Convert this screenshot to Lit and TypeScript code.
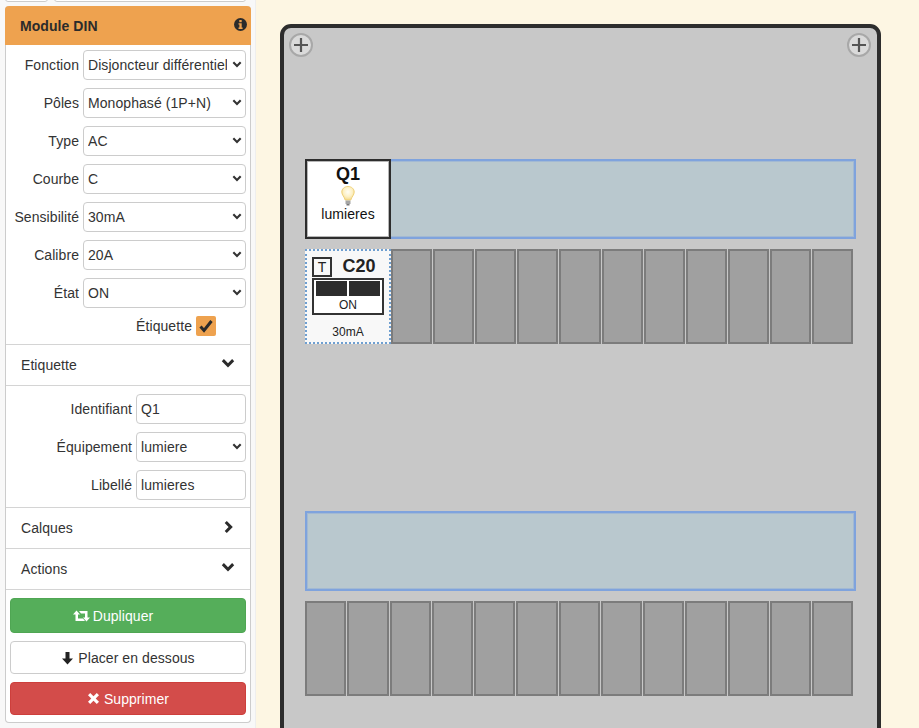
import { LitElement, html, css, svg } from 'lit';
import { customElement } from 'lit/decorators.js';

const chevronDown = svg`<path d="M.8 4.200 2.900 2.100 7 6.200l4.100-4.100 2.100 2.100L7 10.400z" fill="currentColor"/>`;
const chevronRight = svg`<path d="M3.800 1 1.700 3.100 5.600 7l-3.900 3.900L3.800 13l6-6z" fill="currentColor"/>`;

/** One rail position: the label strip and the row of empty module slots under it. */
@customElement('din-rail')
export class DinRail extends LitElement {
  static properties = { filled: { type: Boolean } };
  filled = false;

  static styles = css`
    :host { display: block; width: 551px; }
    .strip {
      height: 80px;
      box-sizing: border-box;
      background: #b9c8ce;
      border: 2px solid #7fa3dd;
      box-shadow: inset 0 0 0 1px rgba(127, 163, 221, 0.4);
      position: relative;
    }
    .tag {
      position: absolute;
      left: -2px;
      top: -2px;
      width: 86px;
      height: 80px;
      box-sizing: border-box;
      background: #fff;
      border: 2px solid #2d2d2d;
      box-shadow: inset 0 0 0 1px rgba(45, 45, 45, 0.35);
      display: flex;
      flex-direction: column;
      align-items: center;
      color: #111;
    }
    .tag b { font-size: 18px; line-height: 20px; margin-top: 3px; }
    .tag svg { display: block; margin-top: 2px; }
    .tag span { font-size: 14px; line-height: 16px; }
    .slots { display: flex; margin-top: 10px; height: 95px; width: 549.25px; }
    .slot {
      flex: 1 1 0;
      box-sizing: border-box;
      background: #a0a0a0;
      border: 2px solid #7c7c7c;
      margin-right: 1px;
    }
    .module {
      flex: 0 0 86px;
      box-sizing: border-box;
      background: #f8f8f8;
      border: 2px dotted #6f9fd0;
      padding: 5px 5px 0;
      color: #222;
    }
    .top { display: flex; align-items: center; }
    .t {
      width: 20px;
      height: 20px;
      box-sizing: border-box;
      border: 2px solid #333;
      font-size: 14px;
      line-height: 16px;
      text-align: center;
    }
    .rating { flex: 1; text-align: center; font-weight: bold; font-size: 18px; padding-left: 2px; }
    .switch { border: 2px solid #333; height: 37px; box-sizing: border-box; margin-top: 1px; background: #fff; }
    .levers { display: flex; gap: 2px; padding: 1px 2px 0; }
    .levers i { flex: 1; height: 15px; background: #2d2d2d; }
    .on { text-align: center; font-size: 12px; line-height: 14px; margin-top: 2px; }
    .sens { text-align: center; font-size: 12px; margin-top: 10px; line-height: 14px; }
  `;

  render() {
    const count = this.filled ? 11 : 13;
    return html`
      <div class="strip">
        ${this.filled
          ? html`<div class="tag">
              <b>Q1</b>
              <svg width="18" height="20" viewBox="0 1 18 20">
                <defs>
                  <radialGradient id="glow" cx="0.5" cy="0.4" r="0.6">
                    <stop offset="0" stop-color="#fffef5" />
                    <stop offset="0.6" stop-color="#fdf0c4" />
                    <stop offset="1" stop-color="#f3d98a" />
                  </radialGradient>
                </defs>
                <path d="M9 1.500C5.300 1.500 2.800 4 2.800 7c0 3 2.400 4.500 3.400 8h5.600c1-3.500 3.400-5 3.400-8 0-3-2.500-5.500-6.200-5.500z" fill="url(#glow)" stroke="#f0d27a" />
                <rect x="6.500" y="15.500" width="5" height="3.500" fill="#a5a5a5" />
                <rect x="7.500" y="19" width="3" height="1.500" fill="#777" />
              </svg>
              <span>lumieres</span>
            </div>`
          : ''}
      </div>
      <div class="slots">
        ${this.filled
          ? html`<div class="module">
              <div class="top"><div class="t">T</div><div class="rating">C20</div></div>
              <div class="switch">
                <div class="levers"><i></i><i></i></div>
                <div class="on">ON</div>
              </div>
              <div class="sens">30mA</div>
            </div>`
          : ''}
        ${Array.from({ length: count }, () => html`<div class="slot"></div>`)}
      </div>
    `;
  }
}

@customElement('app-root')
export class AppRoot extends LitElement {
  static styles = css`
    :host {
      display: flex;
      height: 728px;
      overflow: hidden;
      background: #fdf6e3;
      font-family: "Liberation Sans", Arial, sans-serif;
      font-size: 14px;
      letter-spacing: 0.07px;
      color: #333;
    }
    .side {
      flex: 0 0 256px;
      box-sizing: border-box;
      height: 728px;
      background: #f8f8f8;
      border-right: 1px solid #eee;
      padding-left: 5px;
    }
    .tabs { display: flex; gap: 6px; height: 6px; margin-top: -4px; width: 241px; }
    .tabs div { height: 6px; box-sizing: border-box; background: #fff; border: 1px solid #ccc; border-radius: 4px; }
    .tabs div:first-child { width: 43px; }
    .tabs div:last-child { flex: 1; }
    .panel {
      width: 246px;
      height: 717px;
      margin-top: 4px;
      box-sizing: border-box;
      background: #fff;
      border: 1px solid #ccc;
      border-top: none;
      border-radius: 4px;
    }
    .head {
      height: 39px;
      margin: 0 -1px;
      background: #eea24f;
      border-radius: 4px 4px 0 0;
      display: flex;
      align-items: center;
      justify-content: space-between;
      padding: 0 4px 0 15px;
      font-weight: bold;
      color: #2b2b2b;
    }
    .head svg { margin-top: -3px; }
    .fields { padding: 5px 4px 0 0; }
    .row { display: flex; align-items: center; justify-content: flex-end; height: 30px; margin-bottom: 8px; }
    .row label { margin-right: 4px; white-space: nowrap; }
    .control { position: relative; width: 163px; height: 30px; box-sizing: border-box; }
    .fields.wide .control { width: 110px; }
    select, input {
      appearance: none;
      display: block;
      width: 100%;
      height: 30px;
      box-sizing: border-box;
      border: 1px solid #ccc;
      border-radius: 4px;
      background: #fff;
      padding: 0 4px;
      font: 14px "Liberation Sans", Arial, sans-serif;
      letter-spacing: 0.07px;
      color: #333;
      outline: none;
    }
    select { padding-right: 18px; }
    .caret { position: absolute; right: 4px; top: 10px; pointer-events: none; color: #333; }
    .check-row { display: flex; justify-content: flex-end; align-items: center; height: 20px; margin: 0 34px 8px 0; }
    .check-row span { margin-right: 4px; }
    .box {
      width: 20px;
      height: 20px;
      border-radius: 2px;
      background: #eea24f;
      display: flex;
      align-items: center;
      justify-content: center;
    }
    .sec {
      height: 40px;
      display: flex;
      align-items: center;
      justify-content: space-between;
      padding: 0 15px;
      border-top: 1px solid #d4d4d4;
    }
    .sec svg { color: #2b2b2b; margin-top: -3px; }
    .fields.wide { border-top: 1px solid #d4d4d4; padding-top: 8px; height: 122px; box-sizing: border-box; }
    .actions { border-top: 1px solid #d4d4d4; padding: 8px 4px 0; display: flex; flex-direction: column; gap: 8px; }
    .btn {
      height: 33px;
      box-sizing: border-box;
      border-radius: 4px;
      border: 1px solid #ccc;
      background: #fff;
      display: flex;
      align-items: center;
      justify-content: center;
      gap: 4px;
      color: #333;
    }
    .btn.ok { height: 35px; background: #55ae5a; border-color: #4fa653; color: #fff; gap: 3px; padding-right: 30px; }
    .btn.bad { background: #d34c4a; border-color: #cd3f3c; color: #fff; }
    .main { flex: 1; padding: 24px 0 0 24px; min-width: 0; }
    .board {
      position: relative;
      width: 601px;
      height: 760px;
      box-sizing: border-box;
      background: #c8c8c8;
      border: 4px solid #2d2d2d;
      border-radius: 11px;
      padding: 131px 0 0 21px;
    }
    din-rail + din-rail { margin-top: 167px; }
    .add {
      position: absolute;
      top: 5px;
      width: 24px;
      height: 24px;
      box-sizing: border-box;
      border-radius: 50%;
      border: 2px solid #a8a8a8;
      background: #dadada;
      display: flex;
      align-items: center;
      justify-content: center;
    }
    .add.l { left: 5px; }
    .add.r { right: 6px; }
  `;

  private field(label: string, value: string, options: string[] = [value]) {
    return html`<div class="row">
      <label>${label}</label>
      <div class="control">
        <select>${options.map((o) => html`<option>${o}</option>`)}</select>
        <svg class="caret" width="10" height="10" viewBox="0 0 14 14">${chevronDown}</svg>
      </div>
    </div>`;
  }

  private text(label: string, value: string) {
    return html`<div class="row">
      <label>${label}</label>
      <div class="control"><input .value=${value} /></div>
    </div>`;
  }

  private section(label: string, open: boolean) {
    return html`<div class="sec">
      <span>${label}</span>
      ${open
        ? html`<svg width="14" height="14" viewBox="0 0 14 14">${chevronDown}</svg>`
        : html`<svg width="14" height="14" viewBox="-2 0 14 14">${chevronRight}</svg>`}
    </div>`;
  }

  private plus() {
    return html`<svg width="16" height="16" viewBox="0 0 16 16">
      <path d="M8 1v14M1 8h14" stroke="#555" stroke-width="2.200" fill="none" />
    </svg>`;
  }

  render() {
    return html`
      <aside class="side">
        <div class="tabs"><div></div><div></div></div>
        <div class="panel">
          <div class="head">
            <span>Module DIN</span>
            <svg width="13" height="13" viewBox="0 0 13 13">
              <circle cx="6.500" cy="6.500" r="6.500" fill="#2b2b2b" />
              <rect x="5.300" y="2" width="2.400" height="2.200" fill="#eea24f" />
              <path d="M4.500 5.200h3.200v4.300h.9v1.400H4.500V9.500h.9V6.600h-.9z" fill="#eea24f" />
            </svg>
          </div>
          <div class="fields">
            ${this.field('Fonction', 'Disjoncteur différentiel')}
            ${this.field('Pôles', 'Monophasé (1P+N)')}
            ${this.field('Type', 'AC')}
            ${this.field('Courbe', 'C')}
            ${this.field('Sensibilité', '30mA')}
            ${this.field('Calibre', '20A')}
            ${this.field('État', 'ON')}
          </div>
          <div class="check-row">
            <span>Étiquette</span>
            <div class="box">
              <svg width="14" height="14" viewBox="0 0 14 14">
                <path d="M1.500 7.500 5 11.500 12.500 2" stroke="#2b2b2b" stroke-width="3" fill="none" />
              </svg>
            </div>
          </div>
          ${this.section('Etiquette', true)}
          <div class="fields wide">
            ${this.text('Identifiant', 'Q1')}
            ${this.field('Équipement', 'lumiere')}
            ${this.text('Libellé', 'lumieres')}
          </div>
          ${this.section('Calques', false)}
          ${this.section('Actions', true)}
          <div class="actions">
            <div class="btn ok">
              <svg width="17" height="14" viewBox="0 0 17 14">
                <path d="M3.500 1.500 7 5.500H5v4h5l2 2.500H2.500V5.500H0zM6 2h8.500v6.500H17l-3.500 4-3.500-4h2v-4H8z" fill="#fff" />
              </svg>
              Dupliquer
            </div>
            <div class="btn">
              <svg width="13" height="14" viewBox="0 0 13 14">
                <path d="M4.500 1h4v6.500H12L6.500 13.500 1 7.500h3.500z" fill="#222" />
              </svg>
              Placer en dessous
            </div>
            <div class="btn bad">
              <svg width="13" height="13" viewBox="0 0 13 13">
                <path d="M3.200 1 6.500 4.300 9.800 1 12 3.200 8.700 6.500 12 9.800 9.800 12 6.500 8.700 3.200 12 1 9.800 4.300 6.500 1 3.200z" fill="#fff" />
              </svg>
              Supprimer
            </div>
          </div>
        </div>
      </aside>
      <main class="main">
        <div class="board">
          <div class="add l">${this.plus()}</div>
          <div class="add r">${this.plus()}</div>
          <din-rail filled></din-rail>
          <din-rail></din-rail>
        </div>
      </main>
    `;
  }
}
